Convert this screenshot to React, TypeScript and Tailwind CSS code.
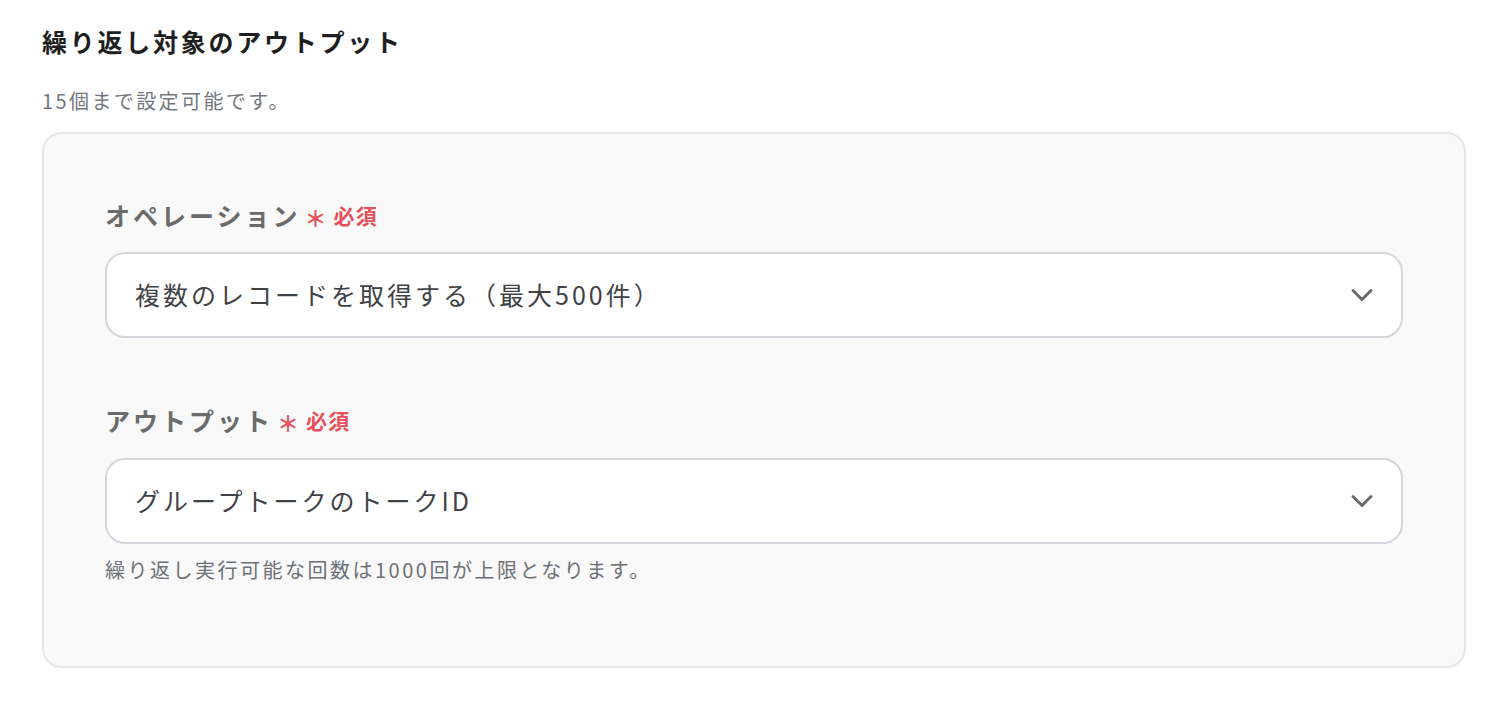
import { ChevronDown } from "lucide-react";

const font = {
  fontFamily: '"Noto Sans CJK JP", "Noto Sans", sans-serif',
};

function Required() {
  return (
    <span className="ml-[4px] inline-flex items-center text-[21px] font-bold text-[#e5505a] tracking-[0.05em]">
      <span className="mr-[6px] text-[22px] leading-none mt-[4px]">＊</span>
      必須
    </span>
  );
}

function Select({ value }: { value: string }) {
  return (
    <div className="flex h-[86px] items-center justify-between rounded-[20px] border-2 border-[#d3d7dc] bg-white pl-[28px] pr-[21px]">
      <span className="text-[25px] text-[#3f4246] tracking-[0.12em]">{value}</span>
      <ChevronDown className="h-[36px] w-[36px] text-[#6b6b6b]" strokeWidth={2} />
    </div>
  );
}

function App() {
  return (
    <div className="min-h-screen bg-white pl-[42px] pr-[38px] pt-[23px]" style={font}>
      <h1 className="text-[25px] font-bold leading-[36px] text-[#1f1f1f] tracking-[0.11em]">
        繰り返し対象のアウトプット
      </h1>
      <p className="mt-[27px] text-[20px] leading-[30px] text-[#73777d] tracking-[0.12em]">
        15個まで設定可能です。
      </p>
      <div className="mt-[16px] rounded-[20px] border-2 border-[#e6e6e6] bg-[#f9f9f9] px-[61px] pt-[63px] pb-[81px]">
        <div className="flex items-center text-[25px] font-bold leading-[36px] text-[#6b6b6b] tracking-[0.12em]">
          オペレーション
          <Required />
        </div>
        <div className="mt-[19px]">
          <Select value="複数のレコードを取得する（最大500件）" />
        </div>
        <div className="mt-[64px] flex items-center text-[25px] font-bold leading-[36px] text-[#6b6b6b] tracking-[0.12em]">
          アウトプット
          <Required />
        </div>
        <div className="mt-[20px]">
          <Select value="グループトークのトークID" />
        </div>
        <p className="mt-[11px] text-[20px] leading-[30px] text-[#6d7177] tracking-[0.125em]">
          繰り返し実行可能な回数は1000回が上限となります。
        </p>
      </div>
    </div>
  );
}

export default App;
